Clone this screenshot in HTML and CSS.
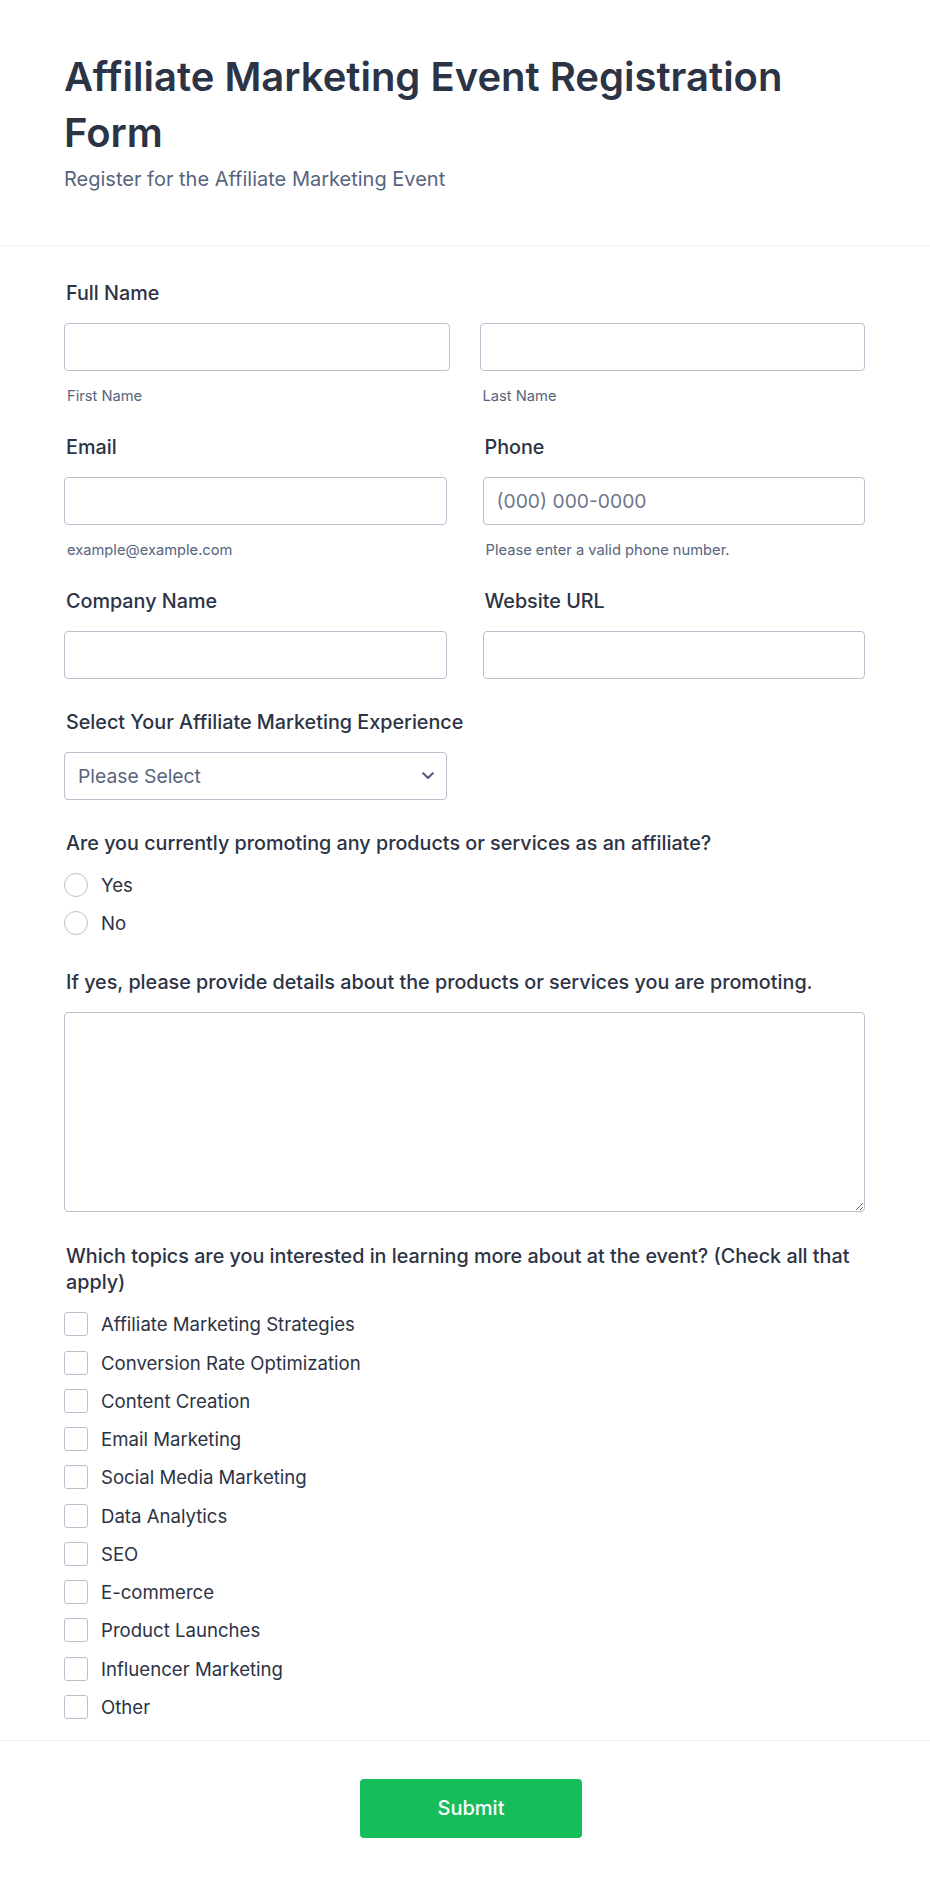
FILE: index.html
```html
<!DOCTYPE html>
<html lang="en">
<head>
<meta charset="utf-8">
<title>Affiliate Marketing Event Registration Form</title>
<link rel="stylesheet" href="styles.css">
</head>
<body>
<div class="page">
  <header class="header">
    <h1 class="title">Affiliate Marketing Event Registration Form</h1>
    <p class="subtitle">Register for the Affiliate Marketing Event</p>
  </header>

  <form class="form">
    <div class="field">
      <div class="label">Full Name</div>
      <div class="row row-name">
        <div class="col">
          <input class="input" type="text">
          <div class="sublabel">First Name</div>
        </div>
        <div class="col">
          <input class="input" type="text">
          <div class="sublabel">Last Name</div>
        </div>
      </div>
    </div>

    <div class="row">
      <div class="field">
        <div class="label">Email</div>
        <input class="input" type="email">
        <div class="sublabel">example@example.com</div>
      </div>
      <div class="field">
        <div class="label">Phone</div>
        <input class="input" type="tel" placeholder="(000) 000-0000">
        <div class="sublabel">Please enter a valid phone number.</div>
      </div>
    </div>

    <div class="row">
      <div class="field">
        <div class="label">Company Name</div>
        <input class="input" type="text">
      </div>
      <div class="field">
        <div class="label">Website URL</div>
        <input class="input" type="text">
      </div>
    </div>

    <div class="field field-select">
      <div class="label">Select Your Affiliate Marketing Experience</div>
      <div class="select-wrap">
        <select class="input select">
          <option>Please Select</option>
        </select>
        <svg class="chevron" width="12" height="8" viewBox="0 0 12 8"><path d="M1.2 1.2 L6 6 L10.8 1.2" fill="none" stroke="#57647e" stroke-width="2.2" stroke-linecap="round" stroke-linejoin="round"/></svg>
      </div>
    </div>

    <div class="field field-radio">
      <div class="label">Are you currently promoting any products or services as an affiliate?</div>
      <div class="options">
        <label class="option"><input class="radio" type="radio" name="promo"><span>Yes</span></label>
        <label class="option"><input class="radio" type="radio" name="promo"><span>No</span></label>
      </div>
    </div>

    <div class="field field-text">
      <div class="label">If yes, please provide details about the products or services you are promoting.</div>
      <textarea class="textarea"></textarea>
    </div>

    <div class="field field-last">
      <div class="label">Which topics are you interested in learning more about at the event? (Check all that apply)</div>
      <div class="options options-check">
        <label class="option"><input class="check" type="checkbox"><span>Affiliate Marketing Strategies</span></label>
        <label class="option"><input class="check" type="checkbox"><span>Conversion Rate Optimization</span></label>
        <label class="option"><input class="check" type="checkbox"><span>Content Creation</span></label>
        <label class="option"><input class="check" type="checkbox"><span>Email Marketing</span></label>
        <label class="option"><input class="check" type="checkbox"><span>Social Media Marketing</span></label>
        <label class="option"><input class="check" type="checkbox"><span>Data Analytics</span></label>
        <label class="option"><input class="check" type="checkbox"><span>SEO</span></label>
        <label class="option"><input class="check" type="checkbox"><span>E-commerce</span></label>
        <label class="option"><input class="check" type="checkbox"><span>Product Launches</span></label>
        <label class="option"><input class="check" type="checkbox"><span>Influencer Marketing</span></label>
        <label class="option"><input class="check" type="checkbox"><span>Other</span></label>
      </div>
    </div>
  </form>

  <footer class="footer">
    <div class="footer-inner">
      <button class="submit" type="button">Submit</button>
    </div>
  </footer>
</div>
</body>
</html>
```

FILE: styles.css
```css
* { box-sizing: border-box; }

html, body {
  margin: 0;
  padding: 0;
  background: #ffffff;
}

body {
  font-family: Inter, "Noto Sans", "Liberation Sans", sans-serif;
  color: #2c3345;
}

.page {
  width: 930px;
  min-height: 1887px;
  background: #ffffff;
}

.header {
  padding: 49px 65px 52px 64px;
  border-bottom: 1px solid #f1f1fa;
}

.title {
  margin: 0;
  font-size: 40px;
  line-height: 56px;
  font-weight: 600;
  color: #2c3345;
}

.subtitle {
  margin: 4px 0 0;
  font-size: 20px;
  line-height: 28px;
  font-weight: 400;
  color: #57647e;
}

.form {
  padding: 34px 65px 21px 64px;
  display: flex;
  flex-direction: column;
}

.field {
  margin-bottom: 30px;
  display: flex;
  flex-direction: column;
}

.row > .field { margin-bottom: 30px; }

.field-select { margin-bottom: 30px; }
.field-radio { margin-bottom: 34px; }
.field-text { margin-bottom: 31px; }
.field-last { margin-bottom: 0; }

.row {
  display: grid;
  grid-template-columns: 1fr 1fr;
  column-gap: 36px;
}

.row-name { column-gap: 30px; }

.col {
  display: flex;
  flex-direction: column;
}

.label {
  font-size: 19.75px;
  line-height: 26px;
  font-weight: 500;
  color: #2c3345;
  padding-left: 2px;
  margin-bottom: 17px;
}

.input {
  display: block;
  width: 100%;
  height: 48px;
  border: 1px solid #b9bfcd;
  border-radius: 4px;
  background: #ffffff;
  font-family: Inter, "Noto Sans", "Liberation Sans", sans-serif;
  font-size: 19.3px;
  color: #2c3345;
  padding: 0 13px;
  outline: none;
}

.input::placeholder {
  color: #6c778c;
}

.sublabel {
  margin-top: 17px;
  padding-left: 3px;
  font-size: 14.7px;
  line-height: 16px;
  color: #57647e;
}

.select-wrap {
  position: relative;
  width: calc((100% - 36px) / 2);
}

.select {
  appearance: none;
  -webkit-appearance: none;
  color: #57647e;
  padding-left: 13px;
}

.chevron {
  position: absolute;
  right: 13px;
  top: 20px;
}

.options {
  display: flex;
  flex-direction: column;
  gap: 14.4px;
}

.options-check { gap: 14.25px; }

.option {
  display: flex;
  align-items: center;
  gap: 13px;
  font-size: 18.6px;
  line-height: 24px;
  color: #2c3345;
}

.radio, .check {
  appearance: none;
  -webkit-appearance: none;
  margin: 0;
  width: 24px;
  height: 24px;
  flex: 0 0 24px;
  border: 1px solid #b9bfcd;
  background: #ffffff;
}

.radio { border-radius: 50%; }
.check { border-radius: 3px; }

.textarea {
  display: block;
  width: 100%;
  height: 200px;
  border: 1px solid #b9bfcd;
  border-radius: 4px;
  background: #ffffff;
  font-family: Inter, "Noto Sans", "Liberation Sans", sans-serif;
  font-size: 19px;
  resize: vertical;
  outline: none;
}

.footer {
  border-top: 1px solid #f1f1fa;
  padding: 38px 65px 49px 64px;
}

.footer-inner {
  display: flex;
  justify-content: center;
  padding-left: 13px;
}

.submit {
  width: 222px;
  height: 59px;
  border: none;
  border-radius: 4px;
  background: #18bd5b;
  color: #ffffff;
  font-family: Inter, "Noto Sans", "Liberation Sans", sans-serif;
  font-size: 20px;
  font-weight: 500;
}
```
